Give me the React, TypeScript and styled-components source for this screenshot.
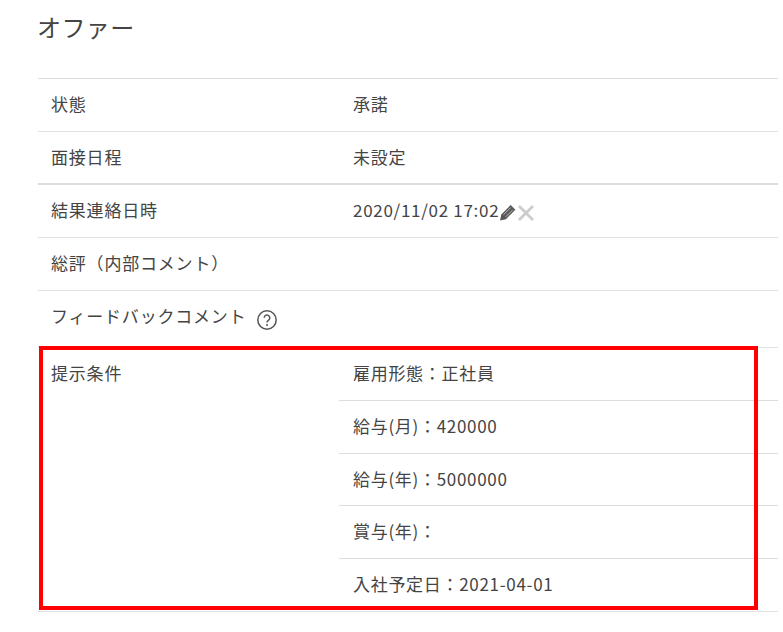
import styled, { createGlobalStyle } from 'styled-components';

const GlobalStyle = createGlobalStyle`
  html, body {
    margin: 0;
    padding: 0;
    background: #fff;
    overflow: hidden;
  }
  body {
    font-family: "Noto Sans CJK JP", "Noto Sans", sans-serif;
    color: #444;
  }
`;

const Page = styled.div`
  width: 783px;
  height: 632px;
  padding: 10px 0 0 38px;
  box-sizing: border-box;
  overflow: hidden;
`;

const Title = styled.h2`
  margin: 0 0 34px -1px;
  height: 34px;
  font-size: 24px;
  line-height: 34px;
  font-weight: 400;
  letter-spacing: 0.4px;
  color: #444;
`;

const Table = styled.div`
  position: relative;
  width: 740px;
  border-top: 1px solid #ddd;
`;

const Row = styled.div<{ $thick?: boolean; $tall?: boolean }>`
  display: grid;
  grid-template-columns: 301px 1fr;
  min-height: ${(p) => (p.$tall ? '56px' : p.$thick ? '51px' : '52px')};
  border-bottom: ${(p) => (p.$thick ? '2px solid #ddd' : '1px solid #e0e0e0')};
`;

const Label = styled.div`
  display: flex;
  align-items: flex-start;
  padding: 12px 0 0 13px;
  font-size: 17px;
  line-height: 26px;
  letter-spacing: 0.8px;
`;

const Value = styled.div`
  padding: 12px 0 0 14px;
  font-size: 17px;
  line-height: 26px;
  letter-spacing: 0.7px;
  display: flex;
  align-items: flex-start;
`;

const Nested = styled.div`
  display: flex;
  flex-direction: column;
`;

const NestedRow = styled.div`
  height: 52.8px;
  padding: 12px 0 0 14px;
  box-sizing: border-box;
  font-size: 17px;
  line-height: 26px;
  letter-spacing: 0.7px;
  border-bottom: 1px solid #ddd;
  &:last-child {
    height: 52px;
    border-bottom: none;
  }
`;

const EditIcon = styled.svg`
  margin: 7px 0 0 0;
  width: 17px;
  height: 17px;
  flex: none;
`;

const ClearIcon = styled.svg`
  margin: 7px 0 0 1px;
  width: 18px;
  height: 18px;
  flex: none;
`;

const HelpIcon = styled.svg`
  margin: 6px 0 0 10px;
  width: 22px;
  height: 22px;
  flex: none;
`;

const Highlight = styled.div`
  position: absolute;
  left: 1px;
  top: 267px;
  width: 719px;
  height: 264px;
  box-sizing: border-box;
  border: 4px solid #f00;
  pointer-events: none;
`;

const conditions = [
  '雇用形態\uFF1A正社員',
  '給与(月)\uFF1A420000',
  '給与(年)\uFF1A5000000',
  '賞与(年)\uFF1A',
  '入社予定日\uFF1A2021-04-01',
];

export default function App() {
  return (
    <Page>
      <GlobalStyle />
      <Title>オファー</Title>
      <Table>
        <Row>
          <Label>状態</Label>
          <Value>承諾</Value>
        </Row>
        <Row $thick>
          <Label>面接日程</Label>
          <Value>未設定</Value>
        </Row>
        <Row>
          <Label>結果連絡日時</Label>
          <Value>
            2020/11/02 17:02
            <EditIcon viewBox="0 0 16 16">
              <path d="M11 1L15.4 5.4 6.5 14.3 1 15.5 2.2 9.8Z" fill="#555" />
              <path d="M4.2 10.2l6.8-6.8M6.2 12.2l6.8-6.8" stroke="#ccc" strokeWidth="0.9" />
            </EditIcon>
            <ClearIcon viewBox="0 0 18 18">
              <path d="M2 2l14 14M16 2L2 16" stroke="#ccc" strokeWidth="2.8" />
            </ClearIcon>
          </Value>
        </Row>
        <Row>
          <Label>{'総評\uFF08内部コメント\uFF09'}</Label>
          <Value />
        </Row>
        <Row $tall>
          <Label>
            フィードバックコメント
            <HelpIcon viewBox="0 0 22 22" fill="none">
              <circle cx="11" cy="11" r="9.2" stroke="#555" strokeWidth="1.5" />
              <path d="M8.2 8.8a2.8 2.8 0 1 1 4.4 2.3c-1 .7-1.6 1.2-1.6 2.4" stroke="#555" strokeWidth="1.5" />
              <circle cx="11" cy="16" r="1" fill="#555" />
            </HelpIcon>
          </Label>
          <Value />
        </Row>
        <Row>
          <Label>提示条件</Label>
          <Nested>
            {conditions.map((c) => (
              <NestedRow key={c}>{c}</NestedRow>
            ))}
          </Nested>
        </Row>
        <Highlight />
      </Table>
    </Page>
  );
}
